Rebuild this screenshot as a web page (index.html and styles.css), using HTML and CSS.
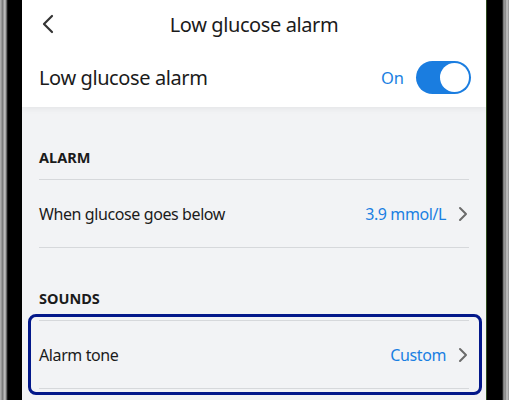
FILE: index.html
```html
<!DOCTYPE html>
<html lang="en">
<head>
    <meta charset="UTF-8">
    <meta name="viewport" content="width=device-width, initial-scale=1.0">
    <title>Low glucose alarm</title>
    <link rel="stylesheet" href="styles.css">
</head>
<body>
    <div class="device">
        <div class="screen">
            <div class="top">
                <div class="titlebar">
                    <span class="back">
                        <svg width="14" height="20" viewBox="0 0 14 20"><path d="M11 2 L3 10 L11 18" fill="none" stroke="#333" stroke-width="2.2" stroke-linecap="round" stroke-linejoin="round"/></svg>
                    </span>
                    <h1 class="title">Low glucose alarm</h1>
                </div>
                <div class="switch-row">
                    <span class="switch-label">Low glucose alarm</span>
                    <span class="switch-state">On</span>
                    <span class="toggle"><span class="knob"></span></span>
                </div>
            </div>

            <div class="section">
                <div class="section-title">ALARM</div>
                <div class="row last">
                    <span class="row-label">When glucose goes below</span>
                    <span class="row-value">3.9 mmol/L</span>
                    <svg class="chev" width="10" height="16" viewBox="0 0 10 16"><path d="M2 2 L8 8 L2 14" fill="none" stroke="#6b6b6b" stroke-width="2" stroke-linecap="round" stroke-linejoin="round"/></svg>
                </div>
            </div>

            <div class="section">
                <div class="section-title">SOUNDS</div>
                <div class="row last selected">
                    <span class="row-label">Alarm tone</span>
                    <span class="row-value">Custom</span>
                    <svg class="chev" width="10" height="16" viewBox="0 0 10 16"><path d="M2 2 L8 8 L2 14" fill="none" stroke="#6b6b6b" stroke-width="2" stroke-linecap="round" stroke-linejoin="round"/></svg>
                </div>
            </div>
        </div>
    </div>
</body>
</html>
```

FILE: styles.css
```css
body {
    margin: 0;
    padding: 0;
    font-family: "Noto Sans", "Open Sans", sans-serif;
    color: #1b1b1b;
    background: #000;
    overflow: hidden;
}
.device {
    width: 509px;
    height: 400px;
    box-sizing: border-box;
    padding: 0 23px 0 22px;
    background:
        linear-gradient(to right, #b9b9b9 0, #8a8a8a 2px, #6e6e6e 3px, #c4c4c4 4px, #9c9c9c 6px, #333 7px, #000 8px, #000 21px, transparent 21px),
        linear-gradient(to left, #8d8d8d 0, #c8c8c8 2px, #7a7a7a 4px, #b0b0b0 5px, #444 6px, #000 7px, #000 22px, #2e4a1e 22px, #2e4a1e 23px, transparent 23px);
    background-color: #000;
}
.screen {
    height: 400px;
    background: #f2f3f5;
    overflow: hidden;
}
.top {
    background: #fff;
    box-shadow: 0 2px 6px rgba(0, 0, 0, 0.06);
    position: relative;
}
.titlebar {
    height: 48px;
    display: flex;
    align-items: center;
    justify-content: center;
    position: relative;
}
.back {
    position: absolute;
    left: 19px;
    top: 14px;
}
.title {
    margin: 0;
    font-size: 20px;
    font-weight: 400;
    letter-spacing: -0.4px;
}
.switch-row {
    height: 59px;
    display: flex;
    align-items: center;
    padding: 0 15px 0 17px;
}
.switch-label {
    flex: 1;
    font-size: 20px;
    letter-spacing: -0.4px;
}
.switch-state {
    color: #1a7fe2;
    font-size: 16.5px;
    margin-right: 12px;
}
.toggle {
    width: 55px;
    height: 33px;
    border-radius: 17px;
    background: #1a7de0;
    box-sizing: border-box;
    padding: 2px;
    display: flex;
    justify-content: flex-end;
}
.knob {
    width: 29px;
    height: 29px;
    border-radius: 50%;
    background: #fff;
}
.section {
    padding: 0 17px;
}
.section-title {
    font-size: 14.5px;
    font-weight: 700;
    line-height: 28px;
    padding: 36px 0 8px;
}
.row {
    height: 67px;
    border-top: 1px solid #d6d8db;
    display: flex;
    align-items: center;
    position: relative;
}
.row.last {
    border-bottom: 1px solid #d6d8db;
}
.row-label {
    flex: 1;
    font-size: 16px;
    letter-spacing: -0.4px;
}
.row-value {
    color: #1a7fe2;
    font-size: 16px;
    letter-spacing: -0.4px;
    margin-right: 12px;
}
.chev {
    margin-right: 1px;
}
.selected::after {
    content: "";
    position: absolute;
    top: -7px;
    bottom: -7px;
    left: -11px;
    right: -13px;
    border: 3px solid #03188a;
    border-radius: 8px;
}
```
